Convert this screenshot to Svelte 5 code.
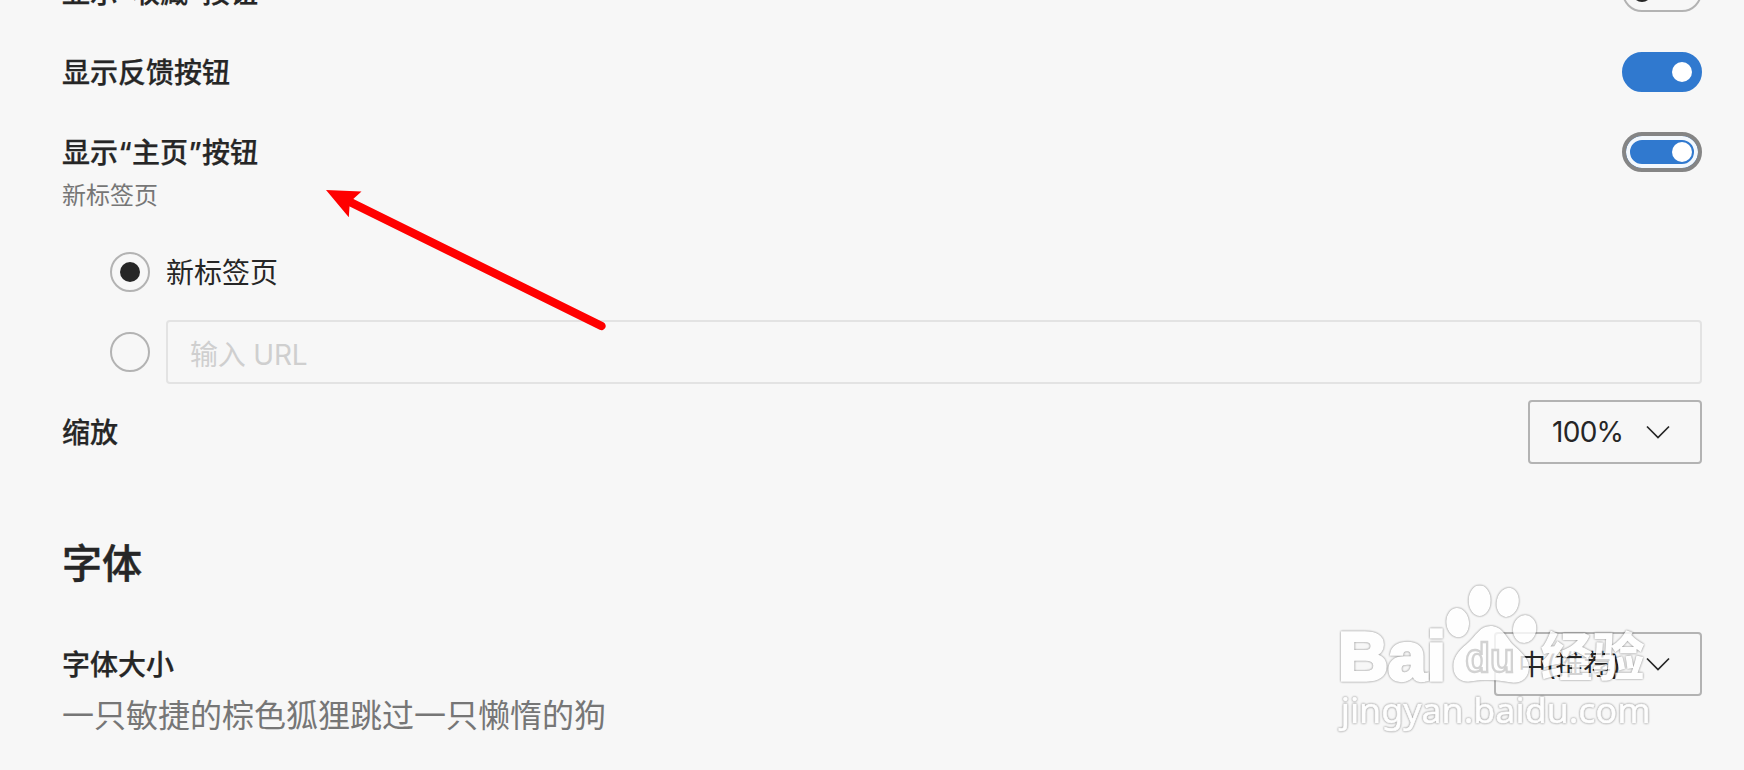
<script>
  let favorites = $state(false);
  let feedback = $state(true);
  let home = $state(true);
  let homeTarget = $state('newtab');
  let url = $state('');

  const toes = [
    { cx: 413, cy: 158, rx: 36, ry: 46, angle: -6 },
    { cx: 479, cy: 92, rx: 35, ry: 48, angle: 0 },
    { cx: 563, cy: 97, rx: 35, ry: 46, angle: 12 },
    { cx: 614, cy: 177, rx: 37, ry: 44, angle: 8 }
  ];
</script>

{#snippet toggle(on, flip, focused, label)}
  <button class="toggle" class:on class:focused role="switch" aria-checked={on} aria-label={label} onclick={flip}>
    <span class="knob"></span>
  </button>
{/snippet}

{#snippet chevron()}
  <svg class="chevron" viewBox="0 0 24 14" width="24" height="14">
    <path d="M1 1.5 L12 12.5 L23 1.5" fill="none" stroke="#262626" stroke-width="1.7" />
  </svg>
{/snippet}

<main class="settings">
  <div class="row">
    <div class="label">显示<span class="quote">“</span>收藏<span class="quote">”</span>按钮</div>
    {@render toggle(favorites, () => (favorites = !favorites), false, '收藏')}
  </div>
  <div class="row">
    <div class="label">显示反馈按钮</div>
    {@render toggle(feedback, () => (feedback = !feedback), false, '反馈')}
  </div>
  <div class="row">
    <div class="label">显示<span class="quote">“</span>主页<span class="quote">”</span>按钮</div>
    {@render toggle(home, () => (home = !home), true, '主页')}
  </div>
  <div class="sub">新标签页</div>

  <div class="options">
    <div class="option">
      <button class="radio" class:checked={homeTarget === 'newtab'} aria-label="新标签页" onclick={() => (homeTarget = 'newtab')}></button>
      <span class="option-text">新标签页</span>
    </div>
    <div class="option">
      <button class="radio" class:checked={homeTarget === 'url'} aria-label="URL" onclick={() => (homeTarget = 'url')}></button>
      <input class="url" type="text" placeholder="输入 URL" bind:value={url} />
    </div>
  </div>

  <div class="row zoom">
    <div class="label">缩放</div>
    <button class="select">
      <span class="percent">100%</span>
      {@render chevron()}
    </button>
  </div>

  <h2>字体</h2>

  <div class="row font-size">
    <div class="label">字体大小</div>
    <button class="select wide">
      <span class="size">中(推荐)</span>
      {@render chevron()}
    </button>
  </div>
  <div class="sample">一只敏捷的棕色狐狸跳过一只懒惰的狗</div>

  <svg class="arrow" viewBox="0 0 310 170" width="310" height="170">
    <path d="M38 31 L291.5 156" stroke="#f00" stroke-width="8.4" stroke-linecap="round" />
    <path d="M16 20 L51.5 21.6 L43.5 28.8 L39.5 36.5 L38.8 47.3 Z" fill="#f00" />
  </svg>

  <svg class="watermark" viewBox="0 0 1272 540" width="424" height="180">
    <g class="mark">
      <text class="bai" x="54" y="329" font-size="205" font-weight="700" textLength="324" lengthAdjust="spacingAndGlyphs">Bai</text>
      {#each toes as t}
        <ellipse cx={t.cx} cy={t.cy} rx={t.rx - 2} ry={t.ry - 2} transform="rotate({t.angle} {t.cx} {t.cy})" />
      {/each}
      <path d="M511 168 C480 168 470 195 440 222 C412 245 400 264 400 290 C400 324 427 339 455 334 C495 327 535 329 570 337 C602 342 627 326 627 290 C627 266 600 243 577 222 C556 197 546 168 511 168 Z" />
      <text class="cjk" x="662" y="319" font-size="156" font-weight="900" textLength="312" lengthAdjust="spacingAndGlyphs">经验</text>
      <text class="site" x="62" y="458" font-size="105" textLength="930" lengthAdjust="spacingAndGlyphs">jingyan.baidu.com</text>
    </g>
    <text class="du" x="436" y="306" font-size="122" font-weight="700" textLength="148" lengthAdjust="spacingAndGlyphs">du</text>
  </svg>
</main>

<style>
:global(body) {
  background: #f7f7f7;
  overflow: hidden;
}
.settings {
  position: relative;
  box-sizing: border-box;
  height: 770px;
  padding: 0 42px 0 62px;
  overflow: hidden;
  background: #f7f7f7;
  color: #262626;
  font-family: Inter, "Noto Sans CJK SC", sans-serif;
  font-size: 28px;
}
.row {
  display: flex;
  align-items: center;
  justify-content: space-between;
  height: 80px;
}
.row:first-child {
  margin-top: -48px;
}
.label {
  padding-top: 2px;
  font-weight: 500;
  line-height: 40px;
  white-space: nowrap;
  -webkit-text-stroke: 0.25px #262626;
}
.quote {
  display: inline-block;
  width: 14px;
  text-align: center;
}
.toggle {
  box-sizing: border-box;
  display: flex;
  align-items: center;
  width: 80px;
  height: 40px;
  padding: 0 8px;
  border: 2px solid #b3b3b3;
  border-radius: 20px;
  background: transparent;
}
.knob {
  width: 20px;
  height: 20px;
  border-radius: 50%;
  background: #262626;
}
.toggle.on {
  justify-content: flex-end;
  border-color: #3079cf;
  background: #3079cf;
}
.toggle.on .knob {
  background: #fff;
}
.toggle.focused {
  border: 4px solid #858585;
  padding: 0 6px;
  box-shadow: inset 0 0 0 4px #f3f8fd;
}
.sub {
  height: 36px;
  margin-top: -14px;
  line-height: 36px;
  font-size: 24px;
  color: #767676;
}
.options {
  padding: 38px 0 0 48px;
}
.option {
  display: flex;
  align-items: center;
  gap: 16px;
}
.option:first-child {
  height: 40px;
}
.option:last-child {
  height: 64px;
  margin-top: 28px;
}
.option-text {
  padding-bottom: 2px;
}
.radio {
  box-sizing: border-box;
  flex: none;
  display: grid;
  place-items: center;
  width: 40px;
  height: 40px;
  padding: 0;
  border: 2px solid #b3b3b3;
  border-radius: 50%;
  background: transparent;
}
.radio.checked::after {
  content: '';
  width: 20px;
  height: 20px;
  border-radius: 50%;
  background: #262626;
}
.url {
  box-sizing: border-box;
  flex: 1;
  height: 64px;
  padding: 5px 22px 0;
  border: 2px solid #e3e3e3;
  border-radius: 4px;
  background: transparent;
  font: inherit;
}
.url::placeholder {
  color: #cfcfcf;
  opacity: 1;
  letter-spacing: -0.2px;
}
.zoom {
  height: 64px;
  margin-top: 16px;
}
.select {
  box-sizing: border-box;
  display: flex;
  align-items: center;
  justify-content: space-between;
  width: 174px;
  height: 64px;
  padding: 0 30px 0 22px;
  border: 2px solid #b3b3b3;
  border-radius: 4px;
  background: transparent;
  color: inherit;
  font: inherit;
  white-space: nowrap;
}
.select.wide {
  width: 208px;
}
.percent {
  letter-spacing: -0.7px;
}
.size {
  padding-bottom: 2px;
  letter-spacing: -0.3px;
}
h2 {
  height: 60px;
  margin: 70px 0 0;
  font-size: 40px;
  font-weight: 500;
  line-height: 60px;
  -webkit-text-stroke: 0.5px #262626;
}
.font-size {
  height: 64px;
  margin-top: 38px;
}
.sample {
  height: 48px;
  margin-top: -4px;
  line-height: 48px;
  font-size: 32px;
  color: #767676;
}
.arrow {
  position: absolute;
  left: 310px;
  top: 170px;
}
.watermark {
  position: absolute;
  left: 1320px;
  top: 570px;
  pointer-events: none;
}
/* white shapes with a soft grey rim */
.mark {
  fill: #fff;
  opacity: 0.8;
  font-family: "Liberation Sans", sans-serif;
  filter: drop-shadow(0 0 3.5px rgba(0, 0, 0, 0.5)) drop-shadow(0 0 2px rgba(0, 0, 0, 0.2));
}
.mark .bai {
  stroke: #fff;
  stroke-width: 10px;
}
.mark .cjk {
  font-family: "Noto Sans CJK SC", sans-serif;
}
.mark .site {
  font-family: "Noto Sans", sans-serif;
  stroke: #fff;
  stroke-width: 2px;
}
.du {
  fill: #fff;
  fill-opacity: 0.9;
  stroke: #d2d2d2;
  stroke-width: 7px;
  font-family: "Liberation Sans", sans-serif;
}
</style>
